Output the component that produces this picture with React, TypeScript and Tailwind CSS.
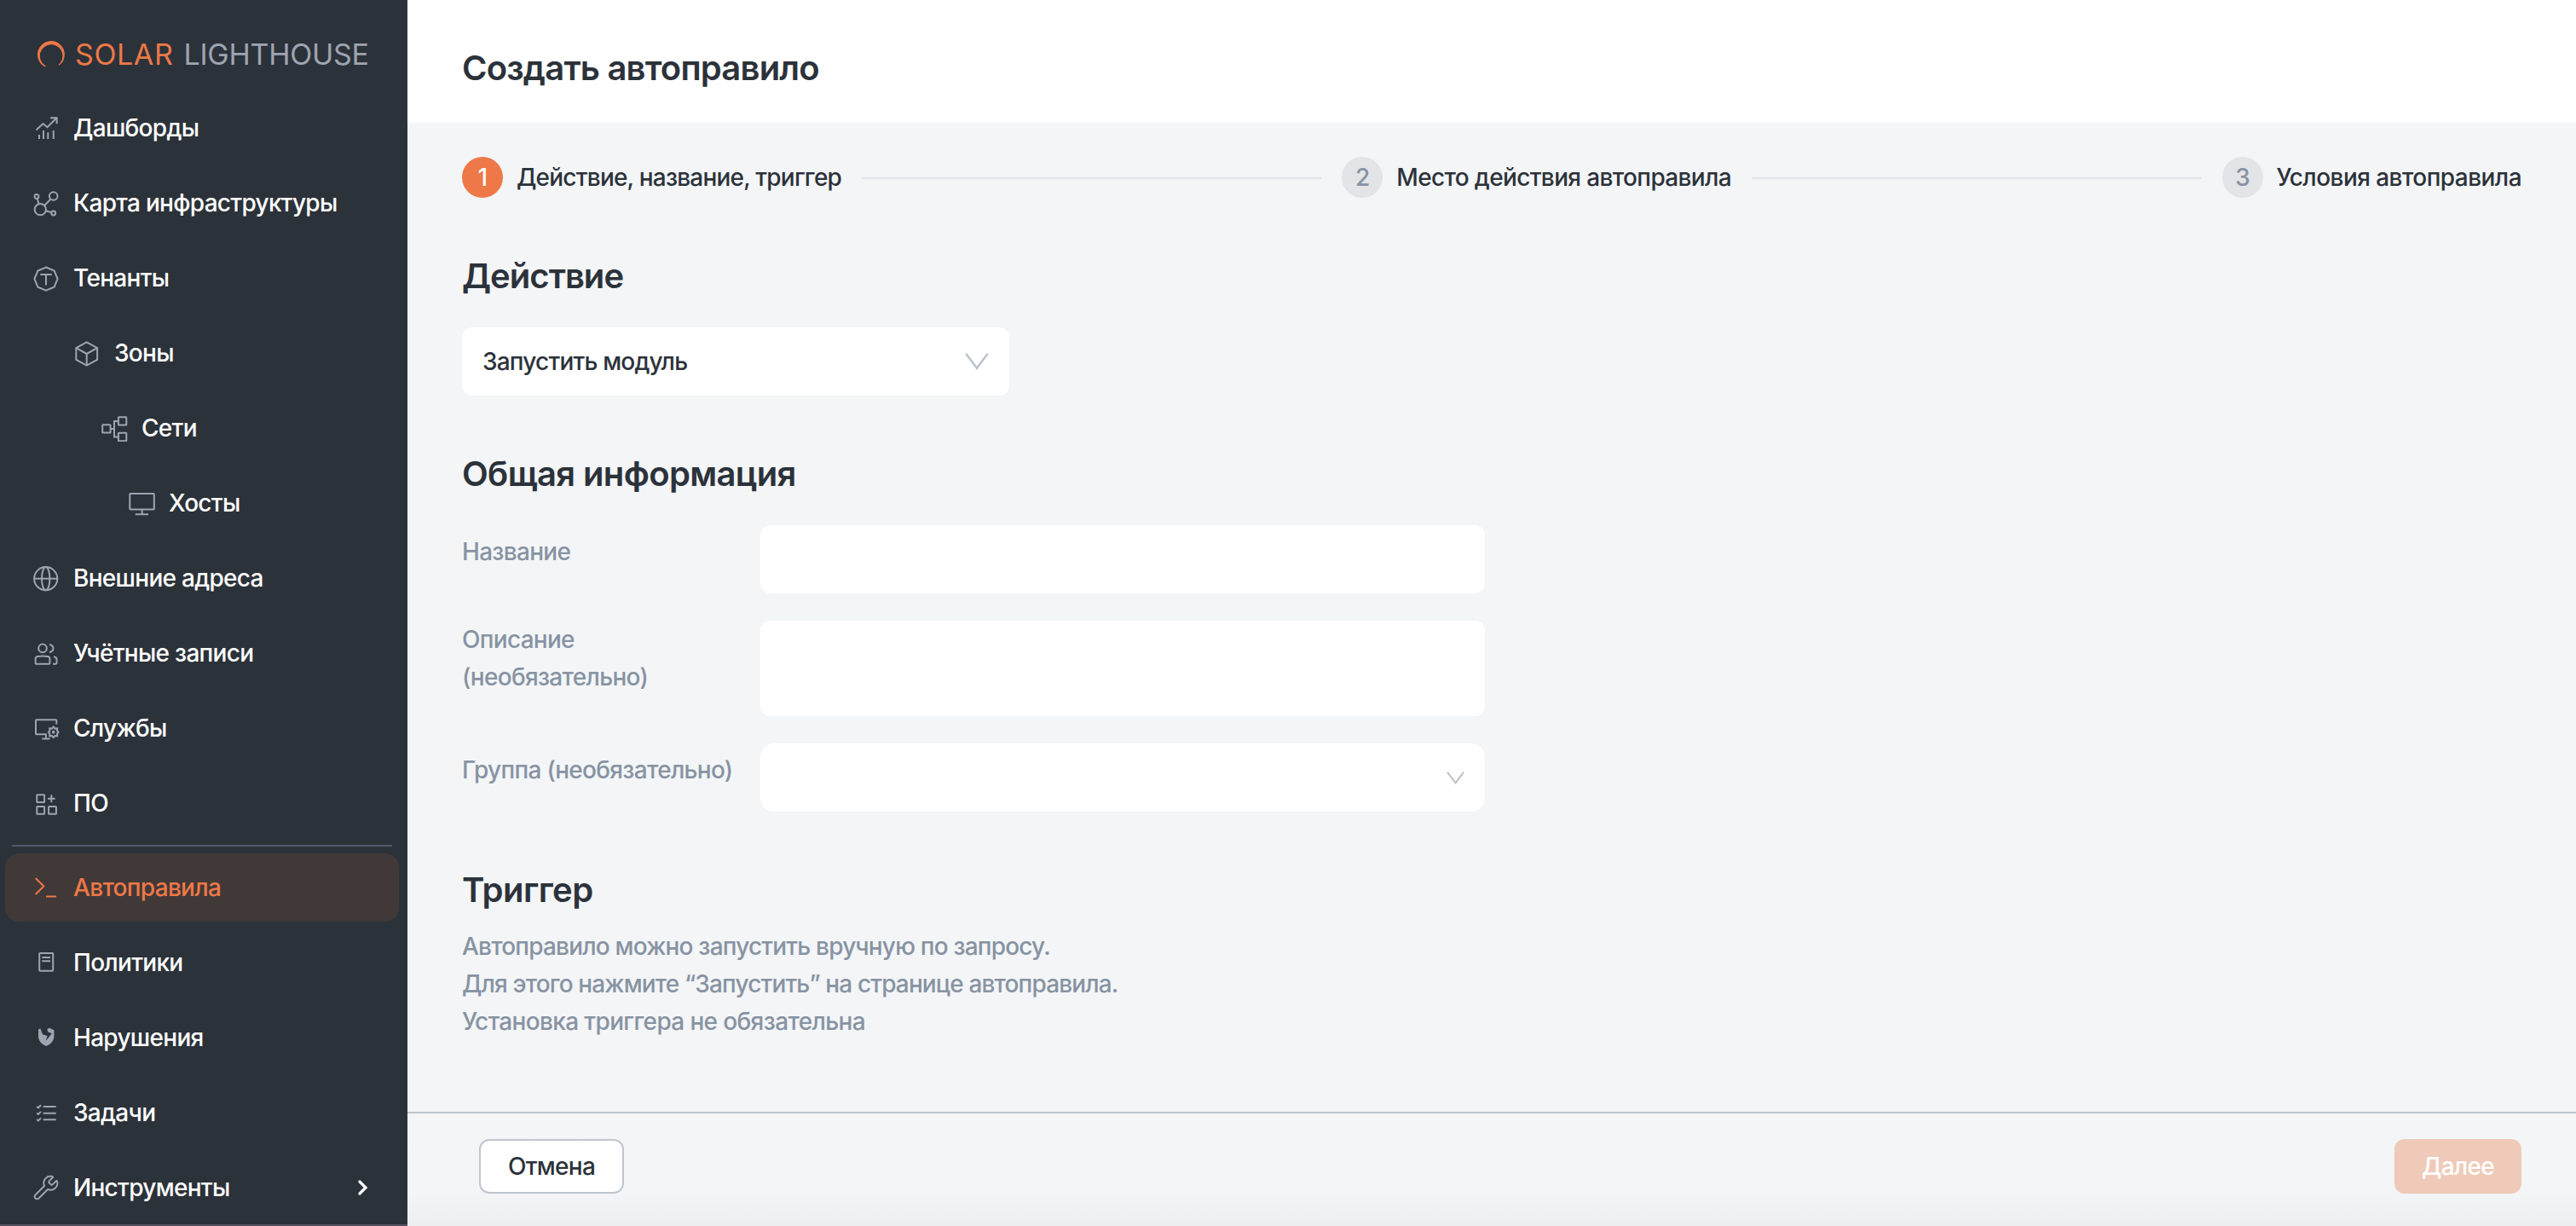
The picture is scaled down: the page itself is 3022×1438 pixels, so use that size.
import type { ReactNode } from 'react'
import { Wrench } from 'lucide-react'
import clsx from 'clsx'

interface NavItem {
    label: string
    icon: ReactNode
    indent?: string
    active?: boolean
    expandable?: boolean
}

function Icon({ children }: { children: ReactNode }) {
    return (
        <svg
            viewBox="0 0 32 32"
            className="w-8 h-8 shrink-0"
            fill="none"
            stroke="currentColor"
            strokeWidth="2"
        >
            {children}
        </svg>
    )
}

const mainItems: NavItem[] = [
    {
        label: 'Дашборды',
        icon: (
            <Icon>
                <path d="M4.5 18.5 12.5 11l5 4.2L28 4.8M21 4.2h7.6v7" />
                <path d="M8 24v5M13 19v10M18.3 21.3V29M24.7 19v10" />
            </Icon>
        )
    },
    {
        label: 'Карта инфраструктуры',
        icon: (
            <Icon>
                <circle cx="5" cy="8.5" r="2.4" />
                <circle cx="9.3" cy="23.7" r="6.6" />
                <circle cx="24.7" cy="8" r="4.8" />
                <circle cx="24.7" cy="28" r="2.4" />
                <path d="m5.8 11 1.7 6M14.2 19l7-7.2M16 25.3l6.2 1.8" />
            </Icon>
        )
    },
    {
        label: 'Тенанты',
        icon: (
            <Icon>
                <path d="m16 3.5 9.6 4 4 9.6-4 9.6-9.6 4-9.6-4-4-9.6 4-9.6z" />
                <path d="M9.3 12h13.4M16 12v12.5" />
            </Icon>
        )
    },
    {
        label: 'Зоны',
        indent: 'ml-12',
        icon: (
            <Icon>
                <path d="m15.7 3.4 12.4 6.8v13.6l-12.4 6.8-12.4-6.8V10.2z" />
                <path d="m3.3 10.2 12.4 6.8 12.4-6.8M15.7 17v13.5" />
            </Icon>
        )
    },
    {
        label: 'Сети',
        indent: 'ml-20',
        icon: (
            <Icon>
                <rect x="2.2" y="12.2" width="9.4" height="9.4" rx="0.5" />
                <rect x="20.9" y="3.2" width="9.4" height="9.4" rx="0.5" />
                <rect x="20.9" y="21.8" width="9.4" height="9.4" rx="0.5" />
                <path d="M11.6 17H16M21 8h-5v18.5h5" />
            </Icon>
        )
    },
    {
        label: 'Хосты',
        indent: 'ml-28',
        icon: (
            <Icon>
                <rect x="2.3" y="5" width="28.5" height="18.6" rx="0.8" />
                <path d="M16.6 23.6v5.7M8.7 29.3H24" />
            </Icon>
        )
    },
    {
        label: 'Внешние адреса',
        icon: (
            <Icon>
                <circle cx="15.7" cy="16.7" r="13.6" />
                <ellipse cx="15.7" cy="16.7" rx="4.7" ry="13.6" />
                <path d="M2.1 16.7h27.2" />
            </Icon>
        )
    },
    {
        label: 'Учётные записи',
        icon: (
            <Icon>
                <circle cx="12" cy="10.4" r="4.8" />
                <path d="M3.6 27.8v-5c0-1.6.8-2.4 2.3-2.7 3.6-.8 8.6-.8 12.2 0 1.5.3 2.3 1.1 2.3 2.7v5c0 .6-.3.9-.9.9h-15c-.6 0-.9-.3-.9-.9Z" />
                <path d="M20 6c3 .8 4.5 2.3 4.5 4.4S23 14.3 20 15.2M25 20.3c2.5.3 3.5 1.4 3.5 3v4.3c0 .7-.4 1.1-1 1.1H24" />
            </Icon>
        )
    },
    {
        label: 'Службы',
        icon: (
            <Icon>
                <path d="M28.3 11.5V7.2c0-.6-.3-.9-.9-.9H4.9c-.6 0-.9.3-.9.9v15.2c0 .6.3.9.9.9h11v5M11.3 28.4h9.2" />
                <path d="m24.7 14.5 1.8 2.1 2.7-.3-.2 2.7 1.5 1.8-1.5 1.8.2 2.7-2.7-.2-1.8 1.9-1.8-1.9-2.7.2.2-2.7-1.5-1.8 1.5-1.8-.2-2.7 2.7.3z" />
                <circle cx="24.7" cy="20.7" r="0.9" />
            </Icon>
        )
    },
    {
        label: 'ПО',
        icon: (
            <Icon>
                <rect x="5.3" y="6.3" width="8.8" height="8.8" rx="0.5" />
                <rect x="5.3" y="20" width="8.8" height="8.8" rx="0.5" />
                <rect x="19.1" y="20" width="8.8" height="8.8" rx="0.5" />
                <path d="M17.9 10.7h8.8M22.3 6.3v8.8" />
            </Icon>
        )
    }
]

const secondaryItems: NavItem[] = [
    {
        label: 'Автоправила',
        active: true,
        icon: (
            <Icon>
                <path d="m3.7 5 9.6 9.5L3.7 24M16 26.4h12" />
            </Icon>
        )
    },
    {
        label: 'Политики',
        icon: (
            <Icon>
                <rect x="8.2" y="5" width="16" height="20.8" rx="0.8" />
                <path d="M11.3 10h9.7M11.3 14.3h9.7" />
            </Icon>
        )
    },
    {
        label: 'Нарушения',
        icon: (
            <Icon>
                <path
                    d="M9.3 5.2 7 6.6V14c0 6 3.6 9.6 9.2 12 5.6-2.4 9.2-6 9.2-12V7.2L20 4.8l-2.5 1 .5 3.4 4.8 2.1-7 8.4 1.8-5.7-5.6-1.8z"
                    fill="currentColor"
                    stroke="none"
                />
            </Icon>
        )
    },
    {
        label: 'Задачи',
        icon: (
            <Icon>
                <path d="M12.7 9h15M12.7 16.7h15M12.7 24.2h15" />
                <path d="m5.2 8.8 1.7 1.5L10 7.2M5.2 16.5 6.9 18l3.1-3.1M5.2 24l1.7 1.5 3.1-3.1" />
            </Icon>
        )
    },
    {
        label: 'Инструменты',
        expandable: true,
        icon: <Wrench className="w-8 h-8 shrink-0" strokeWidth={1.5} />
    }
]

function NavLink({ item }: { item: NavItem }) {
    return (
        <a
            className={clsx(
                'flex h-20 items-center gap-4 rounded-2xl pl-8 pr-9',
                item.active ? 'bg-[#403938] text-[#ee7847]' : 'text-white'
            )}
        >
            <span className={clsx(item.indent, item.active ? 'text-[#ee7847]' : 'text-[#9ea4b1]')}>
                {item.icon}
            </span>
            <span className="flex-1 whitespace-nowrap">{item.label}</span>
            {item.expandable && (
                <svg viewBox="0 0 12 20" className="w-3 h-5" fill="none" stroke="currentColor" strokeWidth="3.2">
                    <path d="m2 3 7 7-7 7" strokeLinecap="round" />
                </svg>
            )}
        </a>
    )
}

function Sidebar() {
    return (
        <aside className="flex w-[478px] shrink-0 flex-col border-b-2 border-[#50535f] bg-[#2c323a] pl-1.5 pr-2.5">
            <div className="flex h-[110px] items-start gap-3 pl-[38px] pt-[43px] text-[34px] leading-[42px]">
                <svg viewBox="0 0 32 32" className="mt-[5px] h-8 w-8 shrink-0">
                    <path
                        d="M9.7 30A15.3 15.3 0 1 1 25 28.3 13.9 13.9 0 1 0 9.7 30Z"
                        fill="#ee7847"
                        stroke="#ee7847"
                        strokeWidth="1.2"
                    />
                </svg>
                <span className="flex gap-3 whitespace-nowrap">
                    <span className="tracking-[0.018em] text-[#ee7847]">SOLAR</span>
                    <span className="tracking-[-0.007em] text-[#9ea4b1]">LIGHTHOUSE</span>
                </span>
            </div>
            <nav className="flex flex-col gap-2 font-medium">
                {mainItems.map((item) => (
                    <NavLink key={item.label} item={item} />
                ))}
            </nav>
            <div className="mx-2 mb-2 mt-[9px] h-0.5 bg-[#50586a]" />
            <nav className="flex flex-col gap-2 font-medium">
                {secondaryItems.map((item) => (
                    <NavLink key={item.label} item={item} />
                ))}
            </nav>
        </aside>
    )
}

interface StepProps {
    index: number
    label: string
    tracking: string
    active?: boolean
    last?: boolean
}

function Step({ index, label, tracking, active, last }: StepProps) {
    return (
        <div className={clsx('flex items-center', last ? 'shrink-0' : 'flex-1')}>
            <div
                className={clsx(
                    'mr-4 flex h-12 w-12 items-center justify-center rounded-full',
                    active ? 'bg-[#ee7847] text-white' : 'bg-[#e2e4e8] text-[#8793a2]'
                )}
            >
                {index}
            </div>
            <span className={clsx('whitespace-nowrap', tracking)}>{label}</span>
            {!last && <div className="mx-6 mt-0.5 h-0.5 flex-1 bg-[#e0e3e9]" />}
        </div>
    )
}

function Chevron({ className }: { className: string }) {
    return (
        <svg viewBox="0 0 28 20" className={className} fill="none" stroke="currentColor" strokeWidth="2.6">
            <path d="M1.2.8 14 17.8 26.8.8" />
        </svg>
    )
}

export default function App() {
    return (
        <div className="flex h-[1438px] w-[3022px] overflow-hidden bg-[#f3f5f7] font-['Inter',sans-serif] text-[28px] leading-[44px] tracking-[-0.025em] text-[#2c323a]">
            <Sidebar />
            <main className="flex min-w-0 flex-1 flex-col">
                <header className="flex h-36 items-center bg-white px-16 pt-4">
                    <h1 className="text-[40px] font-semibold leading-[56px] tracking-[-0.02em]">Создать автоправило</h1>
                </header>

                <section className="flex-1 px-16 pt-10">
                    <div className="flex h-12 items-center font-medium">
                        <Step index={1} label="Действие, название, триггер" tracking="tracking-[-0.028em]" active />
                        <Step index={2} label="Место действия автоправила" tracking="tracking-[-0.023em]" />
                        <Step index={3} label="Условия автоправила" tracking="tracking-[-0.02em]" last />
                    </div>

                    <h2 className="mt-16 text-[40px] font-semibold leading-[56px] tracking-[-0.024em]">Действие</h2>
                    <div className="mt-8 flex h-20 w-[642px] items-center justify-between rounded-xl bg-white px-6 font-medium">
                        <span className="tracking-[-0.029em]">Запустить модуль</span>
                        <Chevron className="h-5 w-7 text-[#bdc5ce]" />
                    </div>

                    <h2 className="mt-16 text-[40px] font-semibold leading-[56px] tracking-[-0.016em]">
                        Общая информация
                    </h2>
                    <div className="mt-8 flex flex-col gap-8 font-medium text-[#8793a2]">
                        <div className="flex">
                            <label className="w-[350px] pt-[9px]">Название</label>
                            <div className="h-20 w-[850px] rounded-xl bg-white" />
                        </div>
                        <div className="flex h-28">
                            <label className="w-[350px]">
                                Описание
                                <br />
                                (необязательно)
                            </label>
                            <div className="w-[850px] rounded-xl bg-white" />
                        </div>
                        <div className="flex">
                            <label className="w-[350px] pt-[9px]">Группа (необязательно)</label>
                            <div className="flex h-20 w-[850px] items-center justify-end rounded-2xl bg-white pr-6">
                                <Chevron className="h-[15px] w-[21px] text-[#bfbfbf]" />
                            </div>
                        </div>
                    </div>

                    <h2 className="mt-16 text-[40px] font-semibold leading-[56px] tracking-[-0.014em]">Триггер</h2>
                    <p className="mt-4 font-medium tracking-[-0.029em] text-[#8793a2]">
                        Автоправило можно запустить вручную по запросу.
                        <br />
                        <span className="tracking-[-0.031em]">
                            Для этого нажмите “Запустить” на странице автоправила.
                        </span>
                        <br />
                        <span className="tracking-[-0.023em]">Установка триггера не обязательна</span>
                    </p>
                </section>

                <footer className="flex h-[134px] shrink-0 items-start justify-between border-t-2 border-[#bdc5cc] bg-gradient-to-b from-[#f3f5f7] from-70% to-[#edeef0] pl-[84px] pr-16 pt-[30px] font-medium">
                    <button className="h-16 w-[170px] rounded-xl border-2 border-[#c0c5cf] bg-white">Отмена</button>
                    <button className="h-16 w-[149px] rounded-xl bg-[#efcab8] text-white">Далее</button>
                </footer>
            </main>
        </div>
    )
}
